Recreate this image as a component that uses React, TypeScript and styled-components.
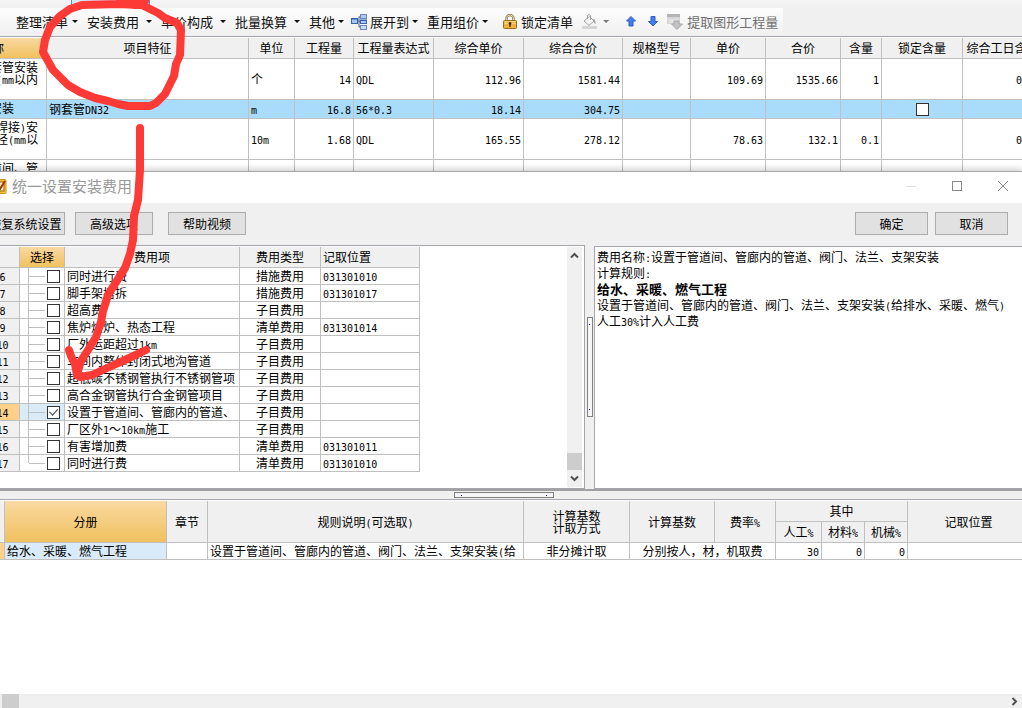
import React from 'react';
import styled, { createGlobalStyle, css } from 'styled-components';

const LINE = '#c0c0c0';
const FACE = '#f0f0f0';

const GlobalStyle = createGlobalStyle`
  *, *::before, *::after { box-sizing: border-box; }
  body {
    margin: 0;
    background: #fff;
    color: #000;
    font-family: "Noto Sans CJK SC", sans-serif;
    font-size: 12px;
    line-height: 16px;
    overflow: hidden;
  }
  button { font: inherit; color: inherit; margin: 0; padding: 0; border: 0; background: none; }
  table { border-collapse: separate; border-spacing: 0; table-layout: fixed; }
`;

/* ---------- text ---------- */

const Latin = styled.span`
  font-family: "DejaVu Sans Mono", monospace;
  font-size: 10px;
  line-height: 0;
  white-space: pre;
`;

function Mixed({ children }: { children: string }) {
  return (
    <>
      {children.split(/([\x20-\x7e]+)/).map((part, i) =>
        i % 2 ? <Latin key={i}>{part}</Latin> : part
      )}
    </>
  );
}

/* ---------- page ---------- */

const Page = styled.div`
  position: relative;
  display: flex;
  flex-direction: column;
  min-height: 100vh;
  overflow: hidden;
`;

const MainWindow = styled.section`
  background: #fff;
  overflow: hidden;
`;

const TabStrip = styled.div`
  height: 8px;
  padding-left: 71px;
  background: linear-gradient(#f5f5f5, #f1f1f1);
`;

const TabEdge = styled.div`
  width: 79px;
  height: 5px;
  border: 1px solid #3c9be0;
  border-top: 0;
  background: #d8eafa;
`;

const ToolbarRow = styled.div`
  display: flex;
  height: 29px;
  background: ${FACE};
  border-bottom: 1px solid #a5a5ad;
`;

const Toolbar = styled.div`
  display: flex;
  align-items: center;
  height: 27px;
  width: 783px;
  background: linear-gradient(#fdfdfd, #f0f0f0);
  font-size: 13px;
  line-height: 26px;
  white-space: nowrap;
`;

const ToolButton = styled.button<{ $disabled?: boolean; $gap?: number; $mr?: number }>`
  display: flex;
  align-items: center;
  gap: ${(p) => p.$gap ?? 4}px;
  height: 26px;
  margin-right: ${(p) => p.$mr ?? 9}px;
  flex: none;
  color: ${(p) => (p.$disabled ? '#6f6f6f' : '#111')};
`;

const Caret = styled.i<{ $muted?: boolean }>`
  width: 6px;
  height: 3px;
  background: ${(p) => (p.$muted ? '#777' : '#111')};
  clip-path: polygon(0 0, 100% 0, 50% 100%);
`;

const Divider = styled.i<{ $mr?: number }>`
  width: 1px;
  height: 16px;
  margin-right: ${(p) => p.$mr ?? 6}px;
  background: #bdbdbd;
`;

const ToolEdge = styled.i`
  width: 1px;
  height: 8px;
  margin-right: 8px;
  background: #3c5a96;
`;

/* ---------- tables ---------- */

const Clip = styled.div`
  overflow: hidden;
`;

const HeadCell = styled.th<{ $active?: boolean; $align?: string }>`
  padding: 0 2px;
  font-weight: 400;
  line-height: 12px;
  white-space: pre-line;
  text-align: ${(p) => p.$align ?? 'center'};
  background: ${(p) => (p.$active ? 'linear-gradient(#fad9a2, #f0c15e)' : FACE)};
  border-right: 1px solid ${LINE};
  border-bottom: 1px solid ${LINE};
`;

const Cell = styled.td<{ $align?: string; $fill?: string; $top?: boolean }>`
  padding: ${(p) => (p.$top ? '2px 2px 0 4px' : '0 2px')};
  line-height: 12px;
  white-space: ${(p) => (p.$top ? 'pre' : 'nowrap')};
  overflow: hidden;
  vertical-align: ${(p) => (p.$top ? 'top' : 'middle')};
  text-align: ${(p) => p.$align ?? 'left'};
  background: ${(p) => p.$fill ?? 'transparent'};
  border-right: 1px solid ${LINE};
  border-bottom: 1px solid ${LINE};
`;

const Check = styled.input.attrs({ type: 'checkbox' })`
  appearance: none;
  display: block;
  position: relative;
  width: 13px;
  height: 13px;
  margin: 0;
  border: 1px solid #333;
  background: #fff;
  &:checked::after {
    content: '';
    position: absolute;
    left: 3px;
    top: 0;
    width: 5px;
    height: 8px;
    border: solid #444;
    border-width: 0 1px 1px 0;
    transform: rotate(42deg);
  }
`;

const QuantityTable = styled.table`
  width: 1105px;
  margin: 1px 0 0 -62px;
  thead th { height: 21px; }
`;

const QuantityRow = styled.tr<{ $selected?: boolean }>`
  background: ${(p) => (p.$selected ? '#a9dbfb' : '#fff')};
  td { height: ${(p) => (p.$selected ? 19 : 41)}px; }
  input { margin: 0 auto; }
`;

/* ---------- dialog ---------- */

const Dialog = styled.section`
  position: relative;
  z-index: 1;
  display: flex;
  flex-direction: column;
  flex: 1;
  margin-top: -30px;
  border-top: 1px solid #a8a8a8;
  background: ${FACE};
  box-shadow: 0 0 8px rgba(0, 0, 0, 0.3);
`;

const TitleBar = styled.header`
  display: flex;
  align-items: center;
  height: 31px;
  padding: 0 13px 3px 0;
  background: #fff;
`;

const AppIcon = styled.svg`
  width: 7px;
  height: 15px;
  margin-right: 5px;
`;

const Title = styled.h1`
  flex: 1;
  margin: 0;
  font-size: 15px;
  font-weight: 400;
  line-height: 28px;
  color: #999;
`;

const WindowButton = styled.button`
  width: 12px;
  height: 12px;
  margin-left: 34px;
  svg { display: block; }
`;

const Actions = styled.div`
  display: flex;
  padding: 9px 14px 10px 0;
`;

const Spacer = styled.span`
  flex: 1;
`;

const PushButton = styled.button<{ $w: number; $mr?: number }>`
  width: ${(p) => p.$w}px;
  height: 23px;
  margin-right: ${(p) => p.$mr ?? 0}px;
  border: 1px solid #adadad;
  background: #e1e1e1;
  line-height: 20px;
  white-space: nowrap;
`;

const FirstButton = styled(PushButton)`
  margin-left: -14px;
`;

const Split = styled.div`
  display: flex;
  height: 244px;
`;

const FeePanel = styled.div`
  display: flex;
  width: 585px;
  flex: none;
  padding: 1px 2px 1px 0;
  background: #fff;
  border: solid #a5a5ad;
  border-width: 1px 1px 1px 0;
`;

const FeeArea = styled(Clip)`
  flex: 1;
`;

const FeeTable = styled.table`
  width: 434px;
  margin-left: -14px;
  thead th { height: 21px; }
  tbody td { height: 17px; }
`;

const NumberCell = styled(Cell)<{ $on?: boolean }>`
  text-align: center;
  background: ${(p) => (p.$on ? '#ffd08a' : FACE)};
`;

const TreeCell = styled(Cell)`
  padding: 0;
`;

const Branch = styled.label<{ $last?: boolean }>`
  display: flex;
  align-items: center;
  height: 16px;
  padding-left: 8px;
  &::before {
    content: '';
    width: 1px;
    height: ${(p) => (p.$last ? 8 : 16)}px;
    align-self: flex-start;
    background: ${LINE};
  }
  &::after {
    content: '';
    order: 1;
    width: 16px;
    height: 1px;
    margin-right: 2px;
    background: ${LINE};
  }
  input { order: 2; }
`;

const VScroll = styled.div`
  display: flex;
  flex-direction: column;
  align-items: center;
  width: 15px;
  background: ${FACE};
`;

const VTrack = styled.div`
  display: flex;
  flex: 1;
  width: 15px;
  align-items: flex-end;
`;

const VThumb = styled.i`
  width: 15px;
  height: 17px;
  background: #cdcdcd;
`;

const ScrollButton = styled.button`
  display: flex;
  align-items: center;
  justify-content: center;
  width: 15px;
  height: 17px;
`;

const gripDots = css`
  display: flex;
  justify-content: space-between;
  align-items: center;
  border: 1px solid #808080;
  background: #f6f6f6;
  &::before, &::after {
    content: '';
    width: 1px;
    height: 1px;
    background: #000080;
  }
`;

const Gutter = styled.div`
  display: flex;
  align-items: center;
  justify-content: center;
  width: 9px;
  flex: none;
`;

const VGrip = styled.div`
  ${gripDots}
  flex-direction: column;
  width: 6px;
  height: 100px;
  padding: 6px 0;
`;

const HGutter = styled.div`
  display: flex;
  align-items: center;
  justify-content: center;
  height: 11px;
  padding-right: 14px;
  border-top: 2px solid #a0a0a0;
  border-bottom: 1px solid #a5a5ad;
`;

const HGrip = styled.div`
  ${gripDots}
  width: 100px;
  height: 6px;
  padding: 0 6px;
`;

const RulePanel = styled.div`
  flex: 1;
  min-width: 0;
  margin-top: 1px;
  padding: 2px 0 0 2px;
  background: #fff;
  border: solid #a5a5ad;
  border-width: 1px 0 1px 1px;
  white-space: nowrap;
  overflow: hidden;
  p { margin: 0; height: 16px; }
`;

const Strong = styled.p`
  font-size: 13px;
  font-weight: 700;
`;

const RulesArea = styled.div`
  display: flex;
  flex-direction: column;
  flex: 1;
  padding-top: 1px;
  background: #fff;
`;

const RulesTable = styled.table`
  width: calc(100% + 8px);
  thead th { height: 21px; }
  tbody td { height: 17px; }
`;

const HScroll = styled.div`
  display: flex;
  align-items: center;
  justify-content: space-between;
  height: 14px;
  margin-top: auto;
  padding-left: 2px;
  background: ${FACE};
`;

const HThumb = styled.i`
  width: 17px;
  height: 14px;
  background: #cdcdcd;
`;

const Ink = styled.svg`
  position: absolute;
  z-index: 2;
  left: 0;
  top: 0;
  width: 200px;
  height: 400px;
  pointer-events: none;
`;

/* ---------- icons ---------- */

const Chevron = ({ d }: { d: string }) => (
  <svg width="9" height="9" viewBox="0 0 9 9" fill="none" stroke="#505050" strokeWidth="2">
    <path d={d} />
  </svg>
);

const TreeIcon = () => (
  <svg width="16" height="16" viewBox="0 0 16 16">
    <path d="M6 7H8M8 2.500V13H10M8 3H10M8 7.500H10" fill="none" stroke="#4a5f92" />
    <rect x="0.500" y="4.500" width="6" height="5" fill="#a9c8f4" stroke="#3864b0" />
    <rect x="9.500" y="0.500" width="6" height="4" fill="#a9c8f4" stroke="#7089bd" />
    <rect x="9.500" y="6" width="6" height="3.500" fill="#a9c8f4" stroke="#3864b0" />
    <rect x="9.500" y="11.500" width="6" height="4" fill="#c7dcfa" stroke="#7089bd" />
    <path d="M1 5H6M10 6.500H15" stroke="#2d5fb8" />
  </svg>
);

const LockIcon = () => (
  <svg width="14" height="15" viewBox="0 0 14 15">
    <path d="M3.500 7V4.500a3.500 3.500 0 0 1 7 0V7" fill="none" stroke="#8d7442" strokeWidth="2.400" />
    <path d="M3.500 7V4.500a3.500 3.500 0 0 1 7 0V7" fill="none" stroke="#e9dcb4" strokeWidth="1" />
    <rect x="0.500" y="6.500" width="13" height="8" rx="1" fill="#eeb13c" stroke="#9c6a18" />
    <path d="M1.500 7.500H12.500M1.500 9.500H12.500" stroke="#fbd986" />
    <circle cx="7" cy="9.500" r="1.400" fill="#4a2d08" />
    <path d="M7 9.500V13" stroke="#4a2d08" strokeWidth="1.400" />
  </svg>
);

const PaintIcon = () => (
  <svg width="15" height="15" viewBox="0 0 15 15">
    <path d="M2 7L7.500 2.500L12 7L7 11.500Z" fill="#f4f4f4" stroke="#a0a0a0" />
    <path d="M5.500 5V1.500Q7 -0.500 8.500 1.500V6" fill="none" stroke="#a0a0a0" />
    <path d="M11 4.500Q14 5.500 13.500 10Q12 10 12 7Z" fill="#a0a0a0" />
    <rect x="0" y="12" width="15" height="3" fill="#d5d5d5" />
  </svg>
);

const ArrowIcon = ({ down }: { down?: boolean }) => (
  <svg width="10" height="11" viewBox="0 0 10 11">
    <path
      d={down ? 'M5 10L0.500 5.500H3V0.500H7V5.500H9.500Z' : 'M5 0.500L9.500 5H7V10H3V5H0.500Z'}
      fill="#3f7ff0"
      stroke="#2f5fc0"
    />
  </svg>
);

const ExtractIcon = () => (
  <svg width="16" height="16" viewBox="0 0 16 16">
    <rect x="0" y="0" width="13" height="10" fill="#d6d6d6" />
    <rect x="0" y="0" width="13" height="3" fill="#b5b5b5" />
    <path d="M2 6H11M2 8H8" stroke="#f2f2f2" />
    <path d="M7 7H12V10H15.500L10 15.500L4.500 10H7Z" fill="#c2c2c2" stroke="#a9a9a9" />
  </svg>
);

/* ---------- data ---------- */

const quantityCols = [109, 202, 46, 59, 80, 90, 99, 68, 75, 75, 41, 81, 80];
const quantityHeads = [
  '名称', '项目特征', '单位', '工程量', '工程量表达式', '综合单价', '综合合价',
  '规格型号', '单价', '合价', '含量', '锁定含量', '综合工日含量',
];
const quantityAligns = [
  'left', 'left', 'left', 'right', 'left', 'right', 'right',
  'left', 'right', 'right', 'right', 'center', 'right',
];
const quantityRows = [
  ['一般穿墙套管安装\n(公称直径(mm以内', '', '个', '14', 'QDL', '112.96', '1581.44', '', '109.69', '1535.66', '1', '', '0.13'],
  ['一般套管安装', '钢套管DN32', 'm', '16.8', '56*0.3', '18.14', '304.75', '', '', '', '', 'check', ''],
  ['室内钢管(焊接)安\n装 公称直径(mm以', '', '10m', '1.68', 'QDL', '165.55', '278.12', '', '78.63', '132.1', '0.1', '', '0.13'],
  ['设置于管道间、管', '', '', '', '', '', '', '', '', '', '', '', ''],
];

const fees: [string, string, string, string][] = [
  ['6', '同时进行费', '措施费用', '031301010'],
  ['7', '脚手架搭拆', '措施费用', '031301017'],
  ['8', '超高费', '子目费用', ''],
  ['9', '焦炉烘炉、热态工程', '清单费用', '031301014'],
  ['10', '厂外运距超过1km', '子目费用', ''],
  ['11', '车间内整体封闭式地沟管道', '子目费用', ''],
  ['12', '超低碳不锈钢管执行不锈钢管项', '子目费用', ''],
  ['13', '高合金钢管执行合金钢管项目', '子目费用', ''],
  ['14', '设置于管道间、管廊内的管道、', '子目费用', ''],
  ['15', '厂区外1～10km施工', '子目费用', ''],
  ['16', '有害增加费', '清单费用', '031301011'],
  ['17', '同时进行费', '清单费用', '031301010'],
];

const Cols = ({ widths }: { widths: number[] }) => (
  <colgroup>
    {widths.map((w, i) => (
      <col key={i} width={w || undefined} />
    ))}
  </colgroup>
);

export default function App() {
  return (
    <Page>
      <GlobalStyle />
      <MainWindow>
        <TabStrip>
          <TabEdge />
        </TabStrip>
        <ToolbarRow>
          <Toolbar>
            <ToolEdge />
            <Divider $mr={8} />
            <ToolButton>整理清单<Caret /></ToolButton>
            <ToolButton $gap={7}>安装费用<Caret /></ToolButton>
            <ToolButton $gap={7}>单价构成<Caret /></ToolButton>
            <ToolButton $gap={7}>批量换算<Caret /></ToolButton>
            <ToolButton $gap={3} $mr={7}>其他<Caret /></ToolButton>
            <ToolButton $gap={3}><TreeIcon />展开到<Caret /></ToolButton>
            <ToolButton $gap={3}>重用组价<Caret /></ToolButton>
            <Divider />
            <ToolButton $gap={4}><LockIcon />锁定清单</ToolButton>
            <ToolButton $gap={6} aria-label="填充颜色"><PaintIcon /><Caret $muted /></ToolButton>
            <Divider $mr={8} />
            <ToolButton $mr={12} aria-label="上移"><ArrowIcon /></ToolButton>
            <ToolButton $mr={9} aria-label="下移"><ArrowIcon down /></ToolButton>
            <ToolButton $disabled disabled><ExtractIcon />提取图形工程量</ToolButton>
          </Toolbar>
        </ToolbarRow>
        <Clip>
          <QuantityTable>
            <Cols widths={quantityCols} />
            <thead>
              <tr>
                {quantityHeads.map((h, i) => (
                  <HeadCell key={h} $active={i === 0}>{h}</HeadCell>
                ))}
              </tr>
            </thead>
            <tbody>
              {quantityRows.map((row, r) => (
                <QuantityRow key={r} $selected={r === 1}>
                  {row.map((value, c) => (
                    <Cell key={c} $align={quantityAligns[c]} $top={c === 0}>
                      {value === 'check' ? <Check aria-label="锁定含量" /> : <Mixed>{value}</Mixed>}
                    </Cell>
                  ))}
                </QuantityRow>
              ))}
            </tbody>
          </QuantityTable>
        </Clip>
      </MainWindow>

      <Dialog>
        <TitleBar>
          <AppIcon viewBox="0 0 7 15">
            <rect x="-8" y="0.500" width="14" height="14" rx="1" fill="#f7c53a" stroke="#d9920c" />
            <rect x="-6" y="3" width="10" height="9" fill="#fff3c4" stroke="#9c5a0a" />
            <path d="M-3 6L0 10L5 2" fill="none" stroke="#a2320c" strokeWidth="2" />
          </AppIcon>
          <Title>统一设置安装费用</Title>
          <WindowButton aria-label="最小化">
            <svg width="12" height="12"><path d="M1 6.500H11" stroke="#e3e3e3" /></svg>
          </WindowButton>
          <WindowButton aria-label="最大化">
            <svg width="12" height="12"><rect x="1.500" y="1.500" width="9" height="9" fill="none" stroke="#8a8a8a" /></svg>
          </WindowButton>
          <WindowButton aria-label="关闭">
            <svg width="12" height="12"><path d="M1 1L11 11M11 1L1 11" stroke="#8a8a8a" /></svg>
          </WindowButton>
        </TitleBar>

        <Actions>
          <FirstButton $w={79} $mr={10}>恢复系统设置</FirstButton>
          <PushButton $w={78} $mr={15}>高级选项</PushButton>
          <PushButton $w={78}>帮助视频</PushButton>
          <Spacer />
          <PushButton $w={73} $mr={7}>确定</PushButton>
          <PushButton $w={73}>取消</PushButton>
        </Actions>

        <Split>
          <FeePanel>
            <FeeArea>
              <FeeTable>
                <Cols widths={[34, 45, 175, 81, 99]} />
                <thead>
                  <tr>
                    <HeadCell />
                    <HeadCell $active>选择</HeadCell>
                    <HeadCell>费用项</HeadCell>
                    <HeadCell>费用类型</HeadCell>
                    <HeadCell $align="left">记取位置</HeadCell>
                  </tr>
                </thead>
                <tbody>
                  {fees.map(([no, name, kind, place], i) => (
                    <tr key={no}>
                      <NumberCell $on={no === '14'}><Mixed>{no}</Mixed></NumberCell>
                      <TreeCell $fill={no === '14' ? '#d9eaf8' : undefined}>
                        <Branch $last={i === fees.length - 1}>
                          <Check aria-label={name} defaultChecked={no === '14'} />
                        </Branch>
                      </TreeCell>
                      <Cell><Mixed>{name}</Mixed></Cell>
                      <Cell $align="center">{kind}</Cell>
                      <Cell><Mixed>{place}</Mixed></Cell>
                    </tr>
                  ))}
                </tbody>
              </FeeTable>
            </FeeArea>
            <VScroll>
              <ScrollButton aria-label="向上滚动"><Chevron d="M1 6.500L4.500 3L8 6.500" /></ScrollButton>
              <VTrack><VThumb /></VTrack>
              <ScrollButton aria-label="向下滚动"><Chevron d="M1 2.500L4.500 6L8 2.500" /></ScrollButton>
            </VScroll>
          </FeePanel>
          <Gutter><VGrip /></Gutter>
          <RulePanel>
            <p><Mixed>费用名称:设置于管道间、管廊内的管道、阀门、法兰、支架安装</Mixed></p>
            <p><Mixed>计算规则:</Mixed></p>
            <Strong>给水、采暖、燃气工程</Strong>
            <p><Mixed>设置于管道间、管廊内的管道、阀门、法兰、支架安装(给排水、采暖、燃气)</Mixed></p>
            <p><Mixed>人工30%计入人工费</Mixed></p>
          </RulePanel>
        </Split>

        <HGutter><HGrip /></HGutter>

        <RulesArea>
          <Clip>
            <RulesTable>
              <Cols widths={[5, 162, 41, 316, 106, 85, 61, 46, 43, 43, 0]} />
              <thead>
                <tr>
                  <HeadCell rowSpan={2} />
                  <HeadCell rowSpan={2} $active>分册</HeadCell>
                  <HeadCell rowSpan={2}>章节</HeadCell>
                  <HeadCell rowSpan={2}><Mixed>规则说明(可选取)</Mixed></HeadCell>
                  <HeadCell rowSpan={2}>{'计算基数\n计取方式'}</HeadCell>
                  <HeadCell rowSpan={2}>计算基数</HeadCell>
                  <HeadCell rowSpan={2}><Mixed>费率%</Mixed></HeadCell>
                  <HeadCell colSpan={3}>其中</HeadCell>
                  <HeadCell rowSpan={2}>记取位置</HeadCell>
                </tr>
                <tr>
                  <HeadCell><Mixed>人工%</Mixed></HeadCell>
                  <HeadCell><Mixed>材料%</Mixed></HeadCell>
                  <HeadCell><Mixed>机械%</Mixed></HeadCell>
                </tr>
              </thead>
              <tbody>
                <tr>
                  <Cell $fill="#ffd08a" />
                  <Cell $fill="#d9eaf8">给水、采暖、燃气工程</Cell>
                  <Cell />
                  <Cell><Mixed>设置于管道间、管廊内的管道、阀门、法兰、支架安装(给</Mixed></Cell>
                  <Cell $align="center">非分摊计取</Cell>
                  <Cell $align="center" colSpan={2}>分别按人，材，机取费</Cell>
                  <Cell $align="right"><Mixed>30</Mixed></Cell>
                  <Cell $align="right"><Mixed>0</Mixed></Cell>
                  <Cell $align="right"><Mixed>0</Mixed></Cell>
                  <Cell />
                </tr>
              </tbody>
            </RulesTable>
          </Clip>
          <HScroll>
            <HThumb />
            <ScrollButton aria-label="向右滚动"><Chevron d="M2.500 1L6 4.500L2.500 8" /></ScrollButton>
          </HScroll>
        </RulesArea>
      </Dialog>

      <Ink viewBox="0 0 200 400" fill="none" stroke="#fe3a37" strokeWidth="8" strokeLinecap="round" strokeLinejoin="round">
        <path d="M140 5L118 4L82 5L70 9L60 16L50 27L45 40L43 52L48 61L53 70L58 75L68 85L80 92L95 98L108 101L118 104L128 106L150 106L156 103L165 94L170 84L174 76L176 64L180 55L181 30L177 23L165 18L158 13L150 9L140 4L128 2L120 2" />
        <path d="M122 1L135 5L145 1" />
        <path d="M140 128L140 170L138 200L134 216L133 240L130 254L125 268L118 279L108 295L103 311L101 322L96 337L88 350L81 361L77 374" />
        <path d="M69 350L71 356L75 364L77 375L80 377L92 375L107 368L127 359L146 350" />
      </Ink>
    </Page>
  );
}
